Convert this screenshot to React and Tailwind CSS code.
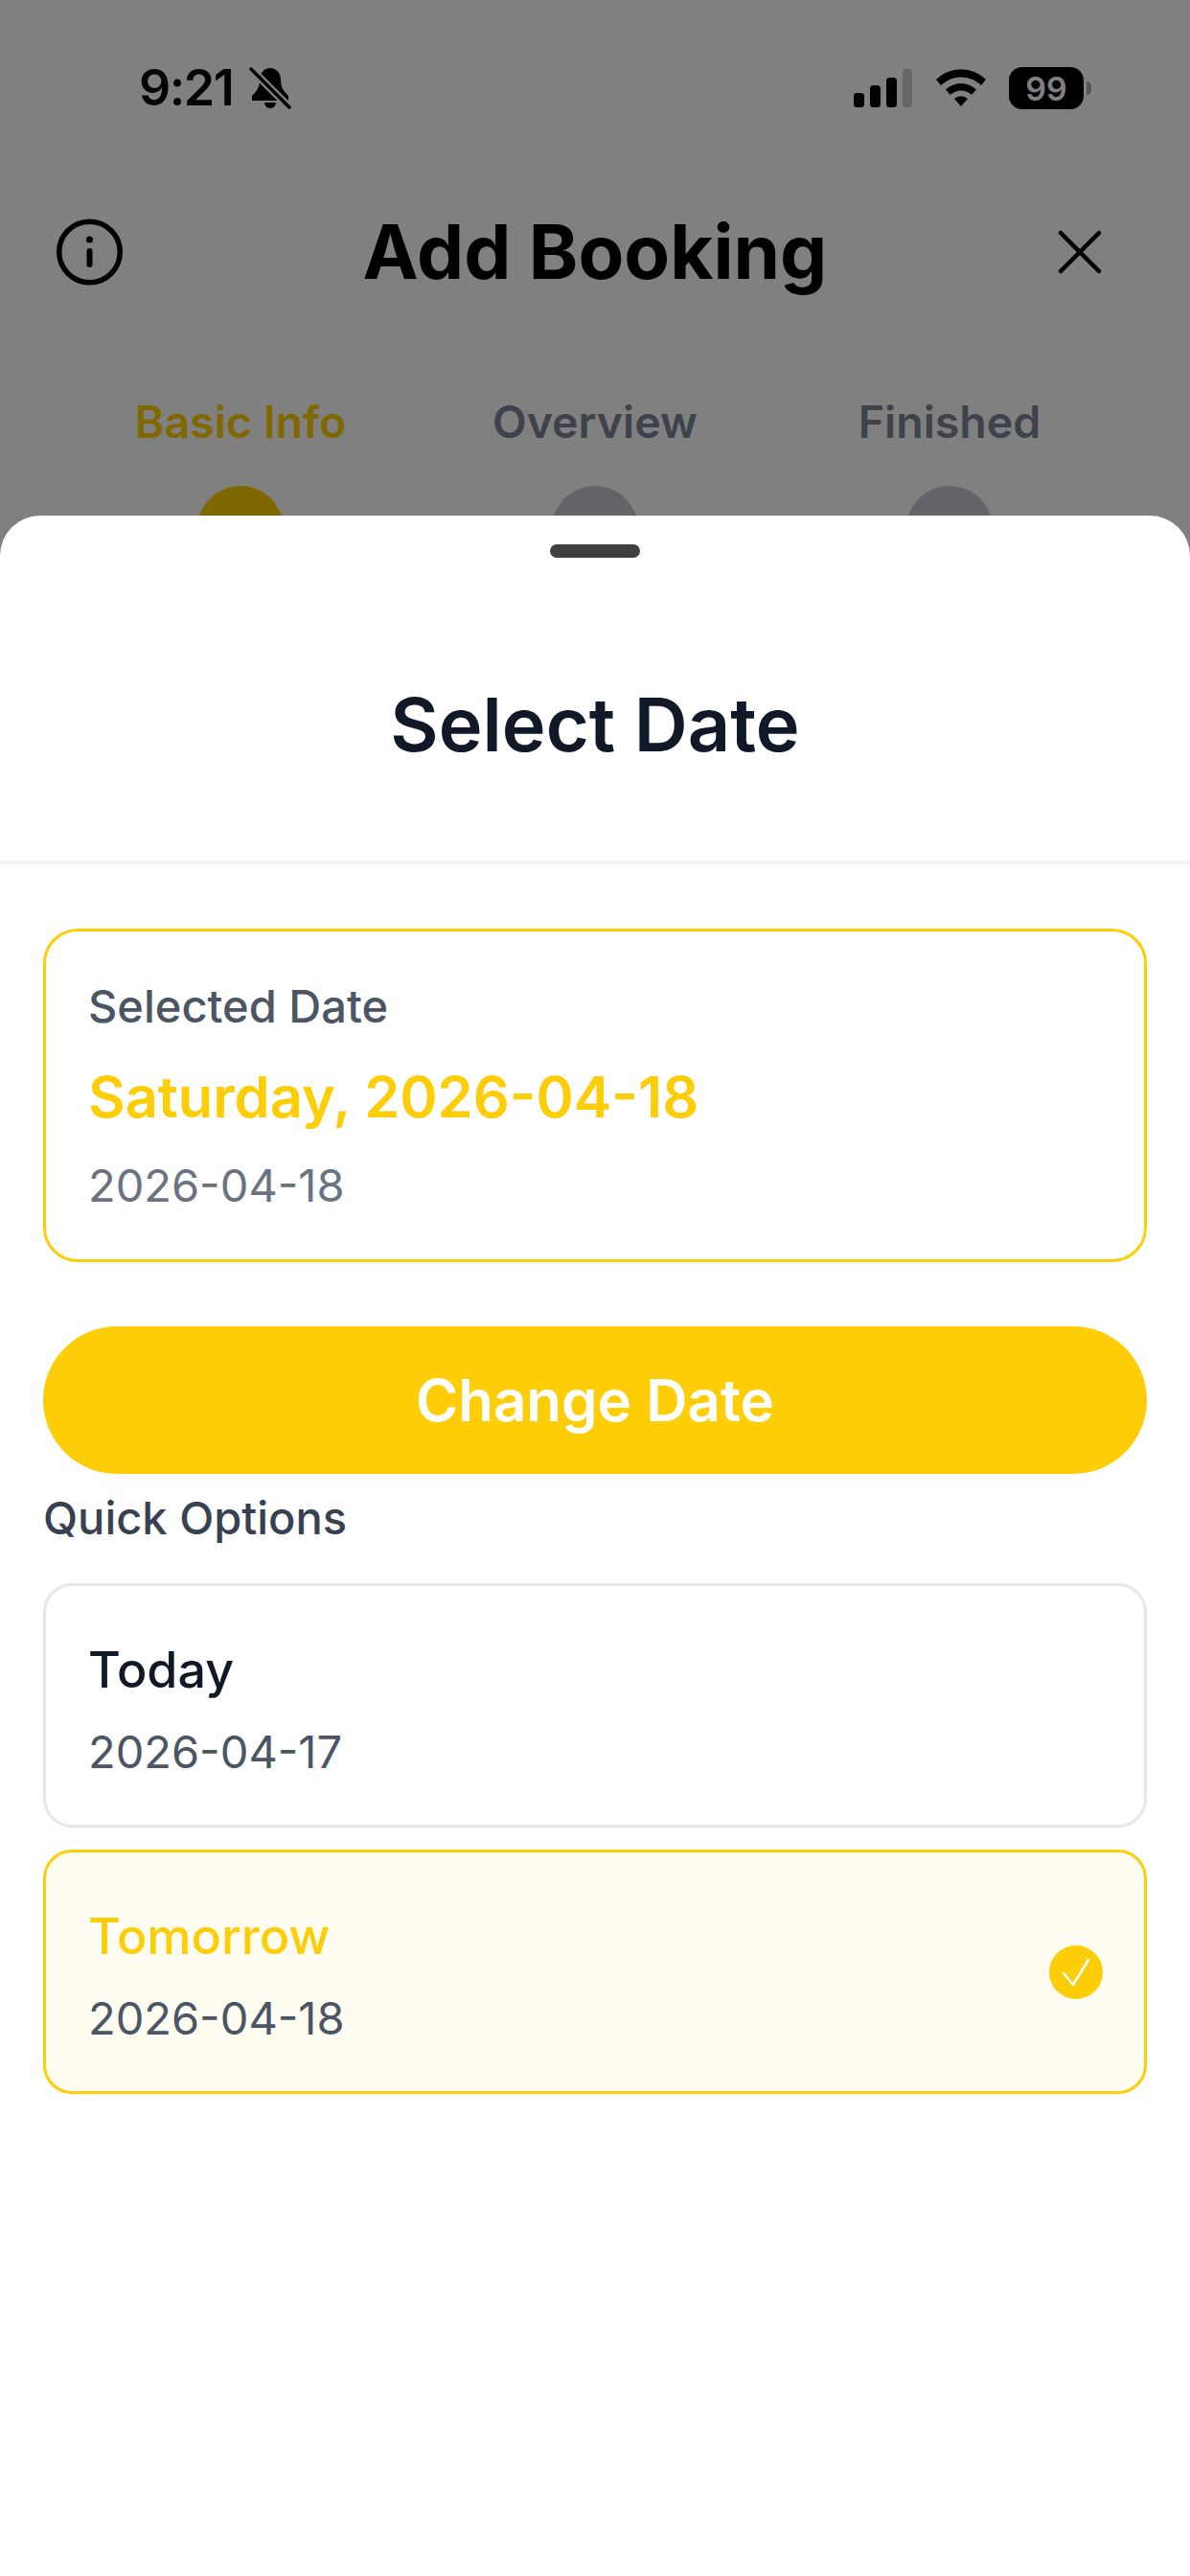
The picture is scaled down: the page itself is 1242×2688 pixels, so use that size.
import React from "react";

const font = { fontFamily: "Inter, sans-serif" };

function StatusBar() {
  return (
    <div className="flex h-[58px] items-center justify-between pl-[145px] pr-[103px] pt-[2px] mt-[62px]">
      <div className="flex items-center gap-[17px]">
        <span className="text-[52px] leading-none font-semibold tracking-[-1.500px] text-[#040404]">9:21</span>
        <svg width="44" height="44" viewBox="0 0 44 44">
          <path d="M22 1c-6 0-11 5-11 12 0 9-4 13-8 17v5h38v-5c-4-4-8-8-8-17 0-7-5-12-11-12z" fill="#000" />
          <path d="M16 37a6 6 0 0 0 12 0z" fill="#000" />
          <path d="M2 2l40 40" stroke="#808080" strokeWidth="8" />
          <path d="M2 2l40 40" stroke="#000" strokeWidth="3.500" strokeLinecap="round" />
        </svg>
      </div>
      <div className="flex items-center gap-[23px]">
        <svg width="62" height="40" viewBox="0 0 62 40">
          <rect x="0" y="25" width="11" height="15" rx="3.500" fill="#000" />
          <rect x="17" y="17" width="11" height="23" rx="3.500" fill="#000" />
          <rect x="34" y="9" width="11" height="31" rx="3.500" fill="#000" />
          <rect x="51" y="0" width="10" height="40" rx="3.500" fill="#666" />
        </svg>
        <svg width="54" height="42" viewBox="0 0 54 42">
          <path d="M1 12a37 37 0 0 1 52 0l-5 6a30 30 0 0 0-42 0z" fill="#000" />
          <path d="M11 22.500a23 23 0 0 1 32 0l-5 5.500a15.500 15.500 0 0 0-22 0z" fill="#000" />
          <path d="M20 32a10 10 0 0 1 14 0l-7 8z" fill="#000" />
        </svg>
        <div className="flex items-center gap-[3px]">
          <div className="flex h-[44px] w-[78px] items-center justify-center rounded-[14px] bg-black text-[34px] font-semibold text-[#808080]">99</div>
          <div className="h-[14px] w-[5px] rounded-r-full bg-[#555]" />
        </div>
      </div>
    </div>
  );
}

function Step({ label, active }) {
  return (
    <div className="flex w-[370px] flex-col items-center">
      <span className={`text-[46.500px] leading-[56px] font-semibold ${active ? "text-[#806800]" : "text-[#3e424b]"}`}>{label}</span>
      <div className={`mt-[39px] h-[90px] w-[90px] shrink-0 rounded-full ${active ? "bg-[#806800]" : "bg-[#636469]"}`} />
    </div>
  );
}

function QuickOption({ title, date, selected }) {
  return (
    <div className={`flex h-[255px] items-center justify-between rounded-[30px] border-[3px] pl-[44px] pr-[43px] ${selected ? "border-[#fdcd07] bg-[#fffdf2]" : "border-[#e5e7eb] bg-white"}`}>
      <div className="flex flex-col pt-[10px]">
        <span className={`text-[52px] leading-[62px] font-medium ${selected ? "text-[#fdcd07]" : "text-[#111827]"}`}>{title}</span>
        <span className="mt-[24px] text-[47px] leading-[60px] text-[#4b5563]">{date}</span>
      </div>
      {selected && (
        <svg width="56" height="56" viewBox="0 0 56 56" fill="none">
          <circle cx="28" cy="28" r="28" fill="#fdcd07" />
          <path d="M15 29l10 12L41 15" stroke="#fff" strokeWidth="2.500" strokeLinecap="round" strokeLinejoin="round" />
        </svg>
      )}
    </div>
  );
}

export default function App() {
  return (
    <div className="flex h-[2688px] w-[1242px] flex-col overflow-hidden bg-[#808080]" style={font}>
      <div className="h-[538px] shrink-0 overflow-hidden">
        <StatusBar />
        <div className="mt-[98px] grid h-[90px] grid-cols-[1fr_auto_1fr] items-center pl-[58px] pr-[92px]">
          <svg width="72" height="72" viewBox="0 0 72 72" fill="none">
            <circle cx="35.500" cy="36" r="31.750" stroke="#000" strokeWidth="5.500" />
            <circle cx="35.500" cy="23" r="3.500" fill="#000" />
            <path d="M35.500 35v14" stroke="#000" strokeWidth="6" strokeLinecap="round" />
          </svg>
          <span className="ml-[34px] text-[78px] leading-none font-bold text-black">Add Booking</span>
          <svg className="justify-self-end" width="46" height="46" viewBox="0 0 46 46" fill="none">
            <path d="M3 3l40 40M43 3L3 43" stroke="#000" strokeWidth="4.500" strokeLinecap="round" />
          </svg>
        </div>
        <div className="mt-[104px] flex px-[66px]">
          <Step label="Basic Info" active />
          <Step label="Overview" />
          <Step label="Finished" />
        </div>
      </div>

      <div className="flex flex-1 flex-col rounded-t-[42px] bg-white">
        <div className="flex justify-center pt-[30px]">
          <div className="h-[14px] w-[94px] rounded-full bg-[#404040]" />
        </div>
        <div className="flex h-[320px] items-center justify-center border-b-[4px] border-[#f3f4f6] pt-[34px]">
          <h1 className="text-[77.500px] leading-none font-semibold text-[#111827]">Select Date</h1>
        </div>
        <div className="flex flex-col px-[45px] pt-[67px]">
          <div className="flex h-[348px] flex-col rounded-[36px] border-[3px] border-[#fdcd07] px-[44px] pt-[50px]">
            <span className="text-[47px] leading-[56px] font-medium text-[#4b5563]">Selected Date</span>
            <span className="mt-[30px] text-[59.500px] leading-[72px] font-semibold text-[#fdcd07]">Saturday, 2026-04-18</span>
            <span className="mt-[29px] text-[47px] leading-[56px] text-[#6b7280]">2026-04-18</span>
          </div>
          <div className="mt-[67px] flex h-[154px] items-center justify-center rounded-full bg-[#fdcd07] text-[60px] font-semibold text-white">Change Date</div>
          <span className="mt-[18px] text-[47px] leading-[56px] font-medium text-[#374151]">Quick Options</span>
          <div className="mt-[40px] flex flex-col gap-[23px]">
            <QuickOption title="Today" date="2026-04-17" />
            <QuickOption title="Tomorrow" date="2026-04-18" selected />
          </div>
        </div>
      </div>
    </div>
  );
}
